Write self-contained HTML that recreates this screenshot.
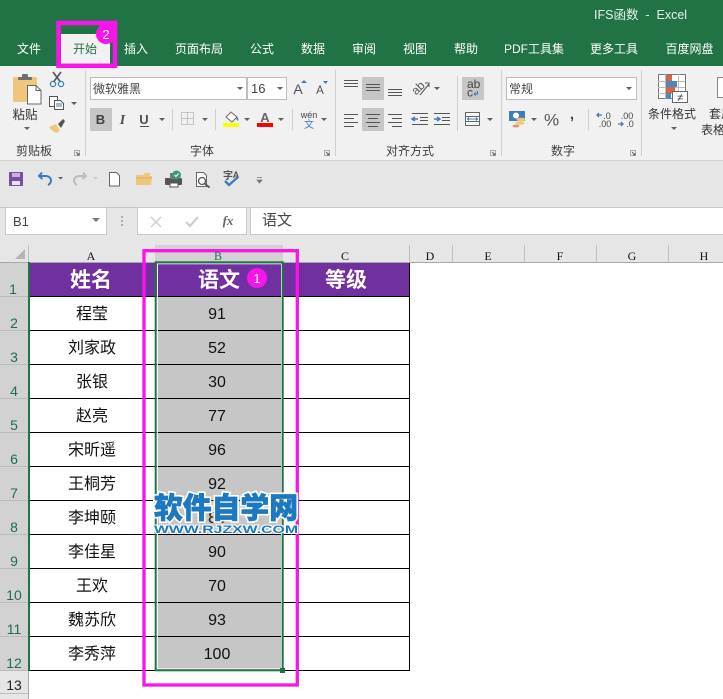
<!DOCTYPE html>
<html lang="zh">
<head>
<meta charset="utf-8">
<title>IFS函数 - Excel</title>
<style>
html,body{margin:0;padding:0;background:#fff;width:723px;height:699px;overflow:hidden}
svg{display:block;font-family:"Liberation Sans","Noto Sans CJK SC",sans-serif}
.tab{font-size:12px;fill:#fff;text-anchor:middle}
.mono{font-family:"Liberation Serif",serif;font-size:12px;fill:#111;text-anchor:middle}
.rn{font-size:14px;fill:#1f6e47;text-anchor:middle}
.name{font-size:16px;fill:#111;text-anchor:middle}
.num{font-size:16px;fill:#111;text-anchor:middle}
.hd{font-size:21px;font-weight:700;fill:#fff;text-anchor:middle}
.ln{stroke:#555;stroke-width:1;fill:none}
.arr{fill:#606060}
.sep{stroke:#cfcfcf;stroke-width:1}
</style>
</head>
<body>
<svg width="723" height="699" viewBox="0 0 723 699" xmlns="http://www.w3.org/2000/svg">
<!-- title and tabs -->
<rect width="723" height="66" fill="#217346"/>
<text x="594" y="19" font-size="12.500" fill="#e8f2ec" style="white-space:pre">IFS函数  -  Excel</text>
<rect x="61" y="34" width="49" height="32" fill="#f1f1f1"/>
<text class="tab" x="29" y="53">文件</text>
<text class="tab" x="85" y="53" style="fill:#217346">开始</text>
<text class="tab" x="136" y="53">插入</text>
<text class="tab" x="199" y="53">页面布局</text>
<text class="tab" x="262" y="53">公式</text>
<text class="tab" x="313" y="53">数据</text>
<text class="tab" x="364" y="53">审阅</text>
<text class="tab" x="415" y="53">视图</text>
<text class="tab" x="466" y="53">帮助</text>
<text class="tab" x="534" y="53">PDF工具集</text>
<text class="tab" x="614" y="53">更多工具</text>
<text class="tab" x="689.500" y="53">百度网盘</text>

<!-- ribbon -->
<rect y="66" width="723" height="94" fill="#f1f1f1"/>
<rect y="160" width="723" height="1" fill="#d2d2d2"/>
<g class="sep">
<line x1="85.500" y1="70" x2="85.500" y2="156"/>
<line x1="335.500" y1="70" x2="335.500" y2="156"/>
<line x1="501.500" y1="70" x2="501.500" y2="156"/>
<line x1="641.500" y1="70" x2="641.500" y2="156"/>
<line x1="172.500" y1="109" x2="172.500" y2="130"/>
<line x1="215.500" y1="109" x2="215.500" y2="130"/>
<line x1="292.500" y1="109" x2="292.500" y2="130"/>
<line x1="457.500" y1="76" x2="457.500" y2="131"/>
<line x1="588.500" y1="109" x2="588.500" y2="130"/>
</g>

<!-- clipboard -->
<rect x="13" y="77" width="24" height="25" rx="1" fill="#eec680"/>
<rect x="18" y="77" width="14" height="3" rx="1" fill="#6e6e6e"/>
<rect x="22" y="74" width="6" height="4" rx="1" fill="#6e6e6e"/>
<path d="M27.500 85.500h8.500l5 5v13.500h-13.500z" fill="#fff" stroke="#666"/>
<path d="M36 85.500v5h5" fill="none" stroke="#666"/>
<text x="25" y="119" font-size="12.500" fill="#333" text-anchor="middle">粘贴</text>
<path d="M24 127h6l-3 3z" class="arr"/>
<path d="M53 72l7.500 10M61 72l-7.500 10" stroke="#555" stroke-width="1.600" fill="none"/>
<circle cx="53" cy="84" r="2.600" fill="none" stroke="#3f7cbc" stroke-width="1.300"/>
<circle cx="61" cy="84" r="2.600" fill="none" stroke="#3f7cbc" stroke-width="1.300"/>
<path d="M49.500 96.500h8v10h-8z" fill="#fff" stroke="#555"/>
<path d="M54.500 100.500h6l3 3v6h-9z" fill="#fff" stroke="#555"/>
<path d="M56 104h6M56 106h6" stroke="#3f7cbc"/>
<path d="M71 102h6l-3 3z" class="arr"/>
<path d="M49 127l7-3 4 6-3 3c-3-1-6-3-8-6z" fill="#eec680"/>
<path d="M58 124l5-5 2 2-4 7z" fill="#555"/>
<text x="34" y="155" font-size="12" fill="#3c3c3c" text-anchor="middle">剪贴板</text>
<path d="M74.500 150.500h5v5h-5z" fill="none" stroke="#aaa"/><path d="M76 152l3 3M79 153v2h-2" stroke="#666" fill="none"/>

<!-- font -->
<rect x="90.500" y="77.500" width="156" height="22" fill="#fff" stroke="#bdbdbd"/>
<rect x="247.500" y="77.500" width="39" height="22" fill="#fff" stroke="#bdbdbd"/>
<text x="93" y="93" font-size="12" fill="#444">微软雅黑</text>
<text x="251" y="93" font-size="13" fill="#444">16</text>
<path d="M237 87h6l-3 3zM277 87h6l-3 3z" class="arr"/>
<text x="298" y="94" font-size="14" fill="#505050" text-anchor="middle">A</text>
<path d="M301 83l3-3 3 3z" fill="#3f7cbc"/>
<text x="320" y="94" font-size="11.500" fill="#505050" text-anchor="middle">A</text>
<path d="M323 81h5l-2.500 3z" fill="#3f7cbc"/>
<rect x="90" y="108" width="22" height="23" fill="#c6c6c6"/>
<text x="100.500" y="124" font-size="13" font-weight="700" fill="#404040" text-anchor="middle">B</text>
<text x="122.500" y="124" font-size="14" font-style="italic" font-weight="700" font-family="Liberation Serif" fill="#505050" text-anchor="middle">I</text>
<text x="144" y="124" font-size="13" font-weight="700" fill="#505050" text-anchor="middle">U</text>
<rect x="140" y="126" width="9" height="1" fill="#505050"/>
<path d="M159 118h6l-3 3zM202 118h6l-3 3zM244 118h6l-3 3zM278 118h6l-3 3zM321 118h6l-3 3z" class="arr"/>
<path d="M181.500 112.500h12v12h-12zM187.500 112.500v12M181.500 118.500h12" stroke="#999" stroke-dasharray="1 1" fill="none"/>
<path d="M226 117l5-5 6 5-5 5z" fill="#fff" stroke="#666"/>
<path d="M236 117c2 0 3 2 2 4-1-1-2-2-2-4z" fill="#3f7cbc"/>
<rect x="223" y="123" width="16" height="4" fill="#ffff00"/>
<text x="265" y="122" font-size="13" font-weight="700" fill="#666" text-anchor="middle">A</text>
<rect x="257" y="123" width="16" height="4" fill="#ff0000"/>
<text x="309" y="118" font-size="9" fill="#444" text-anchor="middle">wén</text>
<text x="309" y="128" font-size="10" fill="#3f7cbc" text-anchor="middle">文</text>
<text x="202" y="155" font-size="12" fill="#3c3c3c" text-anchor="middle">字体</text>
<path d="M324.500 150.500h5v5h-5z" fill="none" stroke="#aaa"/><path d="M326 152l3 3M329 153v2h-2" stroke="#666" fill="none"/>

<!-- alignment -->
<rect x="362" y="77" width="22" height="23" fill="#c6c6c6"/>
<rect x="362" y="108" width="22" height="23" fill="#c6c6c6"/>
<path class="ln" d="M344 80.500h14M344 83.500h14M344 86.500h14"/>
<path class="ln" d="M366 84.500h14M366 87.500h14M366 90.500h14"/>
<path class="ln" d="M388 89.500h14M388 92.500h14M388 95.500h14"/>
<path class="ln" d="M344 114.500h14M344 118.500h10M344 122.500h14M344 126.500h10"/>
<path class="ln" d="M366 114.500h14M368 118.500h10M366 122.500h14M368 126.500h10"/>
<path class="ln" d="M388 114.500h14M392 118.500h10M388 122.500h14M392 126.500h10"/>
<text x="418" y="92" font-size="12" fill="#555" transform="rotate(-45 418 88)" text-anchor="middle">ab</text>
<path d="M420 95l9-11M425 83h4v4" stroke="#555" fill="none"/>
<path d="M434 87h6l-3 3zM487 118h6l-3 3z" class="arr"/>
<path class="ln" d="M412 113.500h16M420 117.500h8M420 120.500h8M412 124.500h16"/>
<path d="M418 119h-5M415 117l-3 2 3 2" stroke="#3f7cbc" stroke-width="1.500" fill="none"/>
<path class="ln" d="M434 113.500h16M442 117.500h8M442 120.500h8M434 124.500h16"/>
<path d="M434 119h5M437 117l3 2-3 2" stroke="#3f7cbc" stroke-width="1.500" fill="none"/>
<rect x="462" y="77" width="22" height="23" fill="#c6c6c6"/>
<text x="467" y="88" font-size="12" fill="#444">ab</text>
<text x="467" y="96.500" font-size="12" fill="#444">c</text>
<path d="M477.500 91v3h-3M476 92.500l-2 1.500 2 1.500" stroke="#3f7cbc" fill="none"/>
<path d="M465.500 112.500h14v13h-14zM465.500 116.500h14M465.500 121.500h14" stroke="#666" fill="#fff"/>
<rect x="467" y="117" width="11" height="4" fill="#fff"/>
<path d="M468 119h9M469 117.500l-1.500 1.500 1.500 1.500M476 117.500l1.500 1.500-1.500 1.500" stroke="#3f7cbc" fill="none"/>
<text x="410" y="155" font-size="12" fill="#3c3c3c" text-anchor="middle">对齐方式</text>
<path d="M490.500 150.500h5v5h-5z" fill="none" stroke="#aaa"/><path d="M492 152l3 3M495 153v2h-2" stroke="#666" fill="none"/>

<!-- number -->
<rect x="506.500" y="77.500" width="130" height="22" fill="#fff" stroke="#bdbdbd"/>
<text x="509" y="93" font-size="12" fill="#444">常规</text>
<path d="M626 87h6l-3 3zM531 118h6l-3 3z" class="arr"/>
<rect x="509" y="111" width="16" height="10" fill="#3f7cbc"/>
<circle cx="516" cy="115.500" r="3" fill="#fff"/>
<ellipse cx="521" cy="119.500" rx="4.500" ry="1.800" fill="#eec680"/>
<ellipse cx="520" cy="123" rx="4.500" ry="1.800" fill="#eec680"/>
<ellipse cx="516" cy="126" rx="3.500" ry="1.500" fill="#e39a55"/>
<text x="551.500" y="125.500" font-size="17" fill="#555" text-anchor="middle">%</text>
<text x="572" y="119" font-size="15" font-weight="700" fill="#444" text-anchor="middle">,</text>
<text x="607" y="119" font-size="9" fill="#444" text-anchor="middle">.0</text>
<text x="605" y="127" font-size="9" fill="#444" text-anchor="middle">.00</text>
<path d="M602 115h-5M599 113l-2 2 2 2" stroke="#3f7cbc" stroke-width="1.300" fill="none"/>
<text x="627" y="119" font-size="9" fill="#444" text-anchor="middle">.00</text>
<text x="630" y="127" font-size="9" fill="#444" text-anchor="middle">.0</text>
<path d="M618 124h5M621 122l2 2-2 2" stroke="#3f7cbc" stroke-width="1.300" fill="none"/>
<text x="563" y="155" font-size="12" fill="#3c3c3c" text-anchor="middle">数字</text>
<path d="M630.500 150.500h5v5h-5z" fill="none" stroke="#aaa"/><path d="M632 152l3 3M635 153v2h-2" stroke="#666" fill="none"/>

<!-- conditional formatting -->
<rect x="658.500" y="74.500" width="27" height="24" fill="#fff" stroke="#777"/>
<path d="M658 81.500h27M658 87.500h27M658 93.500h27M665.500 74v25M678.500 74v25" stroke="#bbb" fill="none"/>
<rect x="666" y="75" width="6" height="6" fill="#d9643a"/>
<rect x="666" y="81" width="11" height="6" fill="#4f86c0"/>
<rect x="666" y="87" width="9" height="6" fill="#d9643a"/>
<rect x="666" y="93" width="5" height="6" fill="#4f86c0"/>
<rect x="672.500" y="91.500" width="15" height="11" fill="#fff" stroke="#666"/>
<text x="680" y="101" font-size="11" fill="#333" text-anchor="middle">≠</text>
<text x="672" y="118" font-size="12" fill="#333" text-anchor="middle">条件格式</text>
<path d="M671 127h6l-3 3z" class="arr"/>
<path d="M717.500 77.500h6v20h-6z" fill="#fff" stroke="#888"/>
<text x="709" y="118" font-size="12" fill="#333">套用</text>
<text x="701" y="134" font-size="12" fill="#333">表格格式</text>

<!-- quick access -->
<rect y="161" width="723" height="46" fill="#e6e6e6"/>
<rect y="207" width="723" height="1" fill="#c4c4c4"/>
<path d="M9 172h14v14h-14z" fill="#7b4fa3"/>
<rect x="12" y="173" width="8" height="4" fill="#c9b3dc"/>
<rect x="12" y="181" width="8" height="4" fill="#e9e0f1"/>
<path d="M42 172.500l-3 3.500 3.500 3" stroke="#3f7cbc" stroke-width="2" fill="none"/>
<path d="M39.500 176h6c4 0 5.500 2.500 5.500 4.500 0 2-1 3.500-3 4.500" stroke="#3f7cbc" stroke-width="2" fill="none"/>
<path d="M58 177h5l-2.500 2.500z" class="arr"/>
<path d="M83 172.500l3 3.500-3.500 3" stroke="#bcbcbc" stroke-width="2" fill="none"/>
<path d="M85.500 176h-6c-4 0-5.500 2.500-5.500 4.500 0 2 1 3.500 3 4.500" stroke="#bcbcbc" stroke-width="2" fill="none"/>
<path d="M93 177h5l-2.500 2.500z" fill="#c8c8c8"/>
<path d="M109.500 172.500h7l3 3v10.500h-10z" fill="#fff" stroke="#666"/>
<path d="M136 175h7l2-2h5v3h2l-1 9h-15z" fill="#eec680"/>
<path d="M136 178h16" stroke="#d9ad60"/>
<rect x="165" y="178" width="17" height="7" rx="1" fill="#555"/>
<rect x="170" y="173" width="8" height="6" fill="#777"/>
<rect x="170" y="183" width="8" height="4" fill="#fff" stroke="#555"/>
<circle cx="176.500" cy="175" r="4.500" fill="#3d9a70"/>
<path d="M174.500 175l1.500 1.500 2.500-3" stroke="#fff" fill="none"/>
<path d="M196.500 172.500h7l3 3v11h-10z" fill="#fff" stroke="#666"/>
<circle cx="202" cy="181" r="3.500" fill="#fff" stroke="#555" stroke-width="1.300"/>
<path d="M204.500 183.500l5 4" stroke="#555" stroke-width="1.800"/>
<text x="228" y="179" font-size="10" font-weight="700" fill="#555" text-anchor="middle">字</text>
<text x="236" y="178" font-size="9" font-weight="700" fill="#555" text-anchor="middle">A</text>
<path d="M225 181l4 4 9-8" stroke="#3f7cbc" stroke-width="2.400" fill="none"/>
<path d="M257 177.500h5M257 180h5l-2.500 3z" stroke="#777" stroke-width=".8" fill="#777"/>

<!-- formula bar -->
<rect y="208" width="723" height="27" fill="#e6e6e6"/>
<rect x="5.500" y="207.500" width="101" height="27" fill="#fff" stroke="#c8c8c8"/>
<text x="13" y="226" font-size="13" fill="#444">B1</text>
<path d="M92 218h8l-4 4z" fill="#777"/>
<path d="M122 216v2M122 220v2M122 224v2" stroke="#aaa" stroke-width="2"/>
<rect x="137.500" y="207.500" width="109" height="27" fill="#fff" stroke="#c8c8c8"/>
<path d="M151 217l10 10M161 217l-10 10" stroke="#cfcfcf" stroke-width="1.500"/>
<path d="M186 222l4 4 8-9" stroke="#cfcfcf" stroke-width="2.200" fill="none"/>
<text x="228" y="225" font-size="13" font-style="italic" font-weight="700" font-family="Liberation Serif" fill="#666" text-anchor="middle">fx</text>
<rect x="250.500" y="207.500" width="473" height="27" fill="#fff" stroke="#c8c8c8"/>
<text x="262" y="225" font-size="15" fill="#444">语文</text>

<!-- headers -->
<rect y="235" width="723" height="28" fill="#e6e6e6"/>
<rect x="155" y="245" width="128" height="17" fill="#d2d2d2"/>
<rect x="0" y="262" width="723" height="1" fill="#a8a8a8"/>
<path d="M25 249v10h-10z" fill="#b5b5b5"/>
<g stroke="#bdbdbd">
<line x1="28.500" y1="245" x2="28.500" y2="262"/>
<line x1="409.500" y1="245" x2="409.500" y2="262"/>
<line x1="452.500" y1="245" x2="452.500" y2="262"/>
<line x1="524.500" y1="245" x2="524.500" y2="262"/>
<line x1="596.500" y1="245" x2="596.500" y2="262"/>
<line x1="668.500" y1="245" x2="668.500" y2="262"/>
</g>
<text class="mono" x="91" y="260">A</text>
<text class="mono" x="218" y="260" style="fill:#217346">B</text>
<text class="mono" x="345" y="260">C</text>
<text class="mono" x="430" y="260">D</text>
<text class="mono" x="488" y="260">E</text>
<text class="mono" x="560" y="260">F</text>
<text class="mono" x="632" y="260">G</text>
<text class="mono" x="704" y="260">H</text>

<!-- row headers -->
<rect y="263" width="28" height="436" fill="#e6e6e6"/>
<rect y="263" width="28" height="408" fill="#d2d2d2"/>
<g stroke="#bcbcbc">
<line x1="0" y1="296.500" x2="28" y2="296.500"/>
<line x1="0" y1="330.500" x2="28" y2="330.500"/>
<line x1="0" y1="364.500" x2="28" y2="364.500"/>
<line x1="0" y1="398.500" x2="28" y2="398.500"/>
<line x1="0" y1="432.500" x2="28" y2="432.500"/>
<line x1="0" y1="466.500" x2="28" y2="466.500"/>
<line x1="0" y1="500.500" x2="28" y2="500.500"/>
<line x1="0" y1="534.500" x2="28" y2="534.500"/>
<line x1="0" y1="568.500" x2="28" y2="568.500"/>
<line x1="0" y1="602.500" x2="28" y2="602.500"/>
<line x1="0" y1="636.500" x2="28" y2="636.500"/>
<line x1="0" y1="670.500" x2="28" y2="670.500"/>
<line x1="0" y1="693.500" x2="28" y2="693.500"/>
</g>
<rect x="28" y="671" width="1" height="28" fill="#a8a8a8"/>
<text class="rn" x="13" y="294">1</text>
<text class="rn" x="14" y="328">2</text>
<text class="rn" x="14" y="362">3</text>
<text class="rn" x="14" y="396">4</text>
<text class="rn" x="14" y="430">5</text>
<text class="rn" x="14" y="464">6</text>
<text class="rn" x="14" y="498">7</text>
<text class="rn" x="14" y="532">8</text>
<text class="rn" x="14" y="566">9</text>
<text class="rn" x="14" y="600">10</text>
<text class="rn" x="14" y="634">11</text>
<text class="rn" x="14" y="668">12</text>
<text class="rn" x="14" y="690" style="fill:#222">13</text>

<!-- table -->
<rect x="29" y="263" width="380" height="33" fill="#70309f"/>
<rect x="157" y="297" width="125" height="373" fill="#c6c6c6"/>
<g stroke="#000">
<line x1="28" y1="296.500" x2="410" y2="296.500"/>
<line x1="28" y1="330.500" x2="410" y2="330.500"/>
<line x1="28" y1="364.500" x2="410" y2="364.500"/>
<line x1="28" y1="398.500" x2="410" y2="398.500"/>
<line x1="28" y1="432.500" x2="410" y2="432.500"/>
<line x1="28" y1="466.500" x2="410" y2="466.500"/>
<line x1="28" y1="500.500" x2="410" y2="500.500"/>
<line x1="28" y1="534.500" x2="410" y2="534.500"/>
<line x1="28" y1="568.500" x2="410" y2="568.500"/>
<line x1="28" y1="602.500" x2="410" y2="602.500"/>
<line x1="28" y1="636.500" x2="410" y2="636.500"/>
<line x1="28" y1="670.500" x2="410" y2="670.500"/>
<line x1="409.500" y1="263" x2="409.500" y2="671"/>
</g>
<rect x="28" y="262" width="2" height="409" fill="#217346"/>
<text class="hd" x="91" y="287">姓名</text>
<text class="hd" x="219" y="287">语文</text>
<text class="hd" x="346" y="287">等级</text>
<text class="name" x="92" y="319">程莹</text>
<text class="name" x="92" y="353">刘家政</text>
<text class="name" x="92" y="387">张银</text>
<text class="name" x="92" y="421">赵亮</text>
<text class="name" x="92" y="455">宋昕遥</text>
<text class="name" x="92" y="489">王桐芳</text>
<text class="name" x="92" y="523">李坤颐</text>
<text class="name" x="92" y="557">李佳星</text>
<text class="name" x="92" y="591">王欢</text>
<text class="name" x="92" y="625">魏苏欣</text>
<text class="name" x="92" y="659">李秀萍</text>
<text class="num" x="217" y="319">91</text>
<text class="num" x="217" y="353">52</text>
<text class="num" x="217" y="387">30</text>
<text class="num" x="217" y="421">77</text>
<text class="num" x="217" y="455">96</text>
<text class="num" x="217" y="489">92</text>
<text class="num" x="217" y="523">85</text>
<text class="num" x="217" y="557">90</text>
<text class="num" x="217" y="591">70</text>
<text class="num" x="217" y="625">93</text>
<text class="num" x="217" y="659">100</text>

<!-- selection -->
<rect x="157.500" y="263.800" width="124" height="405" fill="none" stroke="#f4f4f4" stroke-width="1"/>
<rect x="155.700" y="262.300" width="127" height="408" fill="none" stroke="#217346" stroke-width="2"/>
<rect x="280" y="668" width="5" height="5" fill="#217346"/>

<!-- magenta annotations -->
<rect x="144" y="250.700" width="153.300" height="434.300" fill="none" stroke="#f914ea" stroke-width="3.300"/>
<rect x="58.500" y="23" width="56.500" height="42.800" fill="none" stroke="#f914ea" stroke-width="4.500"/>
<circle cx="106" cy="34" r="10" fill="#f914ea"/>
<text x="106" y="39" font-size="13" fill="#fff" text-anchor="middle">2</text>
<circle cx="257" cy="278" r="10" fill="#f914ea"/>
<text x="257" y="283" font-size="13" fill="#fff" text-anchor="middle">1</text>

<!-- watermark -->
<text x="226" y="518" font-size="29" font-weight="900" fill="#fff" stroke="#fff" stroke-width="4" text-anchor="middle" textLength="144" lengthAdjust="spacingAndGlyphs">软件自学网</text>
<text x="226" y="518" font-size="29" font-weight="900" fill="#1c78c0" stroke="#1c78c0" stroke-width=".7" text-anchor="middle" textLength="144" lengthAdjust="spacingAndGlyphs">软件自学网</text>
<text x="226" y="533" font-size="11" font-weight="700" fill="#1c78c0" stroke="#fff" stroke-width="2" paint-order="stroke" text-anchor="middle" textLength="144" lengthAdjust="spacingAndGlyphs">WWW.RJZXW.COM</text>
</svg>
</body>
</html>
